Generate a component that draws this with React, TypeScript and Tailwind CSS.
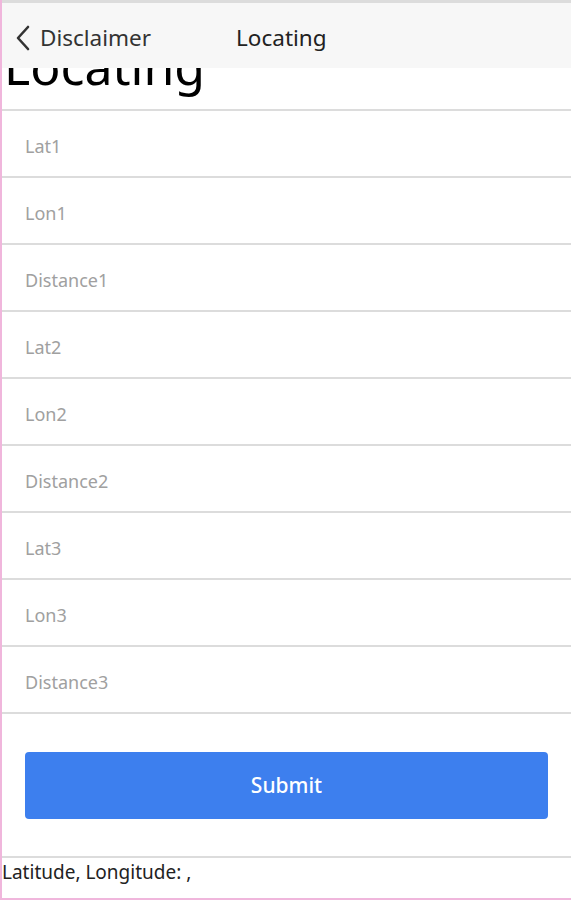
const fields = ['Lat1', 'Lon1', 'Distance1', 'Lat2', 'Lon2', 'Distance2', 'Lat3', 'Lon3', 'Distance3']

export default function App() {
  return (
    <div
      className="relative h-[900px] w-[571px] overflow-hidden border-b-2 border-l-2 border-b-[#f0b6dc] border-l-[#f0b6dc] bg-white text-[#1a1a1a]"
      style={{ fontFamily: '"Noto Sans", "Open Sans", sans-serif' }}
    >
      {/* Nav bar over the scrolled content */}
      <div className="absolute left-0 right-0 top-0 z-10 h-[68px] border-t-[3px] border-[#dcdcdc] bg-[#f7f7f7]">
        <div className="flex h-full items-center pt-[5px]">
          <div className="flex items-center pl-[10px]">
            <svg width="22" height="30" viewBox="0 0 22 30" fill="none" stroke="#333" strokeWidth="2.6" strokeLinecap="round" strokeLinejoin="round">
              <path d="M16 4 L6 15 L16 26" />
            </svg>
            <span className="ml-[6px] text-[22.5px] text-[#333]">Disclaimer</span>
          </div>
          <span className="ml-[85px] text-[22.5px] text-[#222]">Locating</span>
        </div>
      </div>

      {/* Scrolled content */}
      <div className="flex flex-col">
        <h1 className="mt-[31px] h-[78px] pl-[2px] text-[50px] leading-[70px] text-black">Locating</h1>
        <div className="border-t-2 border-[#dcdcdc]">
          {fields.map((f) => (
            <div key={f} className="flex h-[67px] items-center border-b-2 border-[#dcdcdc] pl-[23px] pt-[6px]">
              <input
                placeholder={f}
                className="w-full bg-transparent text-[18px] text-[#222] outline-none placeholder:text-[#a0a0a0]"
              />
            </div>
          ))}
        </div>
        <div className="px-[23px] pt-[38px] pb-[37px]">
          <button className="flex h-[67px] w-full items-center justify-center rounded-[4px] bg-[#3d7fee] text-[21px] font-medium text-white">
            Submit
          </button>
        </div>
        <div className="border-t-2 border-[#dcdcdc]">
          <p className="pt-[1px] text-[19px] leading-[26px] text-[#222]">Latitude, Longitude: ,</p>
        </div>
      </div>
    </div>
  )
}
